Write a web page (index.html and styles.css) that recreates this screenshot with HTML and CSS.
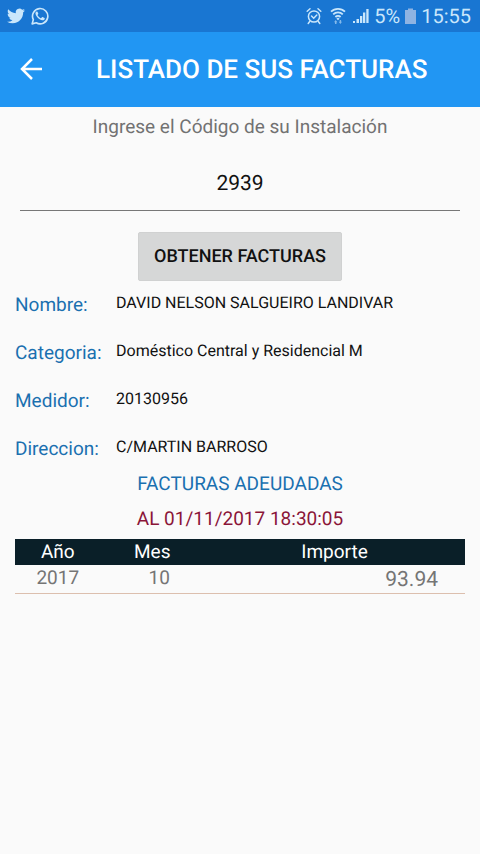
FILE: index.html
```
<!DOCTYPE html>
<html lang="es">
<head>
<meta charset="utf-8">
<meta name="viewport" content="width=device-width, initial-scale=1">
<title>Listado de sus facturas</title>
<link rel="stylesheet" href="styles.css">
</head>
<body>
<div class="status">
  <div class="status-group">
    <svg width="18" height="18" viewBox="0 0 24 24" fill="currentColor" aria-hidden="true"><path d="M23.95 4.57a10 10 0 0 1-2.82.77 4.96 4.96 0 0 0 2.16-2.72c-.95.55-2 .95-3.13 1.18a4.92 4.92 0 0 0-8.38 4.48C7.69 8.1 4.07 6.13 1.64 3.16a4.82 4.82 0 0 0-.67 2.48c0 1.71.87 3.21 2.19 4.1a4.9 4.9 0 0 1-2.23-.62v.06a4.92 4.92 0 0 0 3.95 4.83 5 5 0 0 1-2.21.08 4.94 4.94 0 0 0 4.6 3.42A9.87 9.87 0 0 1 0 19.54a13.99 13.99 0 0 0 7.55 2.21c9.05 0 14-7.5 14-13.98 0-.21 0-.42-.02-.63a9.94 9.94 0 0 0 2.42-2.57z"/></svg>
    <svg width="18" height="18" viewBox="0 0 24 24" aria-hidden="true"><path d="M1.5 22.5l1.6-5.7A10.2 10.2 0 1 1 7 21z" fill="none" stroke="currentColor" stroke-width="2.2" stroke-linejoin="round"/><path d="M8.6 6.3c-.3-.5-.8-.5-1.2-.4-1.2.7-1.6 1.8-1.4 3.2.9 4.2 5 8.1 9.1 8.7 1.5.1 3-.8 3.2-2.3.1-.4 0-.7-.3-.8l-2.6-1.3c-.3-.1-.6-.1-.8.2l-.9 1.2c-.2.2-.5.2-.8.1-1.8-.8-3.2-2.1-4.1-3.8-.1-.3-.1-.5.1-.7l.7-.9c.2-.3.2-.5.1-.8z" fill="currentColor"/></svg>
  </div>
  <div class="status-group status-right">
    <svg width="16" height="18" viewBox="0 0 16 18" fill="none" stroke="currentColor" stroke-width="1.5" stroke-linecap="round" aria-hidden="true"><circle cx="8" cy="9.5" r="5.6"/><path d="M1.2 4.2L4 1.8M14.8 4.2L12 1.8M3.7 14.5l-1.500 2M12.300 14.500l1.500 2M5.500 9l2.200 2.200L10.800 8"/></svg>
    <svg class="wifi" width="16" height="18" viewBox="0 0 16 18" fill="none" stroke="currentColor" stroke-width="1.8" aria-hidden="true"><path d="M1 4.700a9.900 9.900 0 0 1 14 0M3.200 7.400a6.800 6.800 0 0 1 9.600 0M5.400 10a3.700 3.700 0 0 1 5.200 0"/><path d="M8 10.500l1.600 1.300L8 13.300l-1.600-1.500z" fill="currentColor" stroke="none"/><path d="M4 15.200L5.700 13l1.700 2.200H6.500V17H5v-1.800zM8.700 14.800h1V13h1.400v1.800H12L10.400 17z" fill="currentColor" stroke="none" opacity=".6"/></svg>
    <svg width="16" height="18" viewBox="0 0 16 18" fill="currentColor" aria-hidden="true"><path d="M0 14h2v2H0zM3.500 12H6v4H3.500zM7 9h2.300v7H7zM10 5.500h2.300V16H10zM13.300 2h2.300v14h-2.300z"/></svg>
    <span>5%</span>
    <svg width="11" height="18" viewBox="0 0 11 18" aria-hidden="true"><path d="M3 1.500h5V3h3v14H0V3h3z" fill="#8fb3e2"/></svg>
    <time class="clock">15:55</time>
  </div>
</div>
<header class="bar">
  <button class="back" type="button" aria-label="Volver">
    <svg width="24" height="24" viewBox="0 0 24 24" fill="none" stroke="currentColor" stroke-width="2.500" aria-hidden="true"><path d="M22 11H2M12 1L2 11l10 10"/></svg>
  </button>
  <h1>LISTADO DE SUS FACTURAS</h1>
</header>
<main>
  <form class="search">
    <label for="code">Ingrese el Código de su Instalación</label>
    <input id="code" type="text" inputmode="numeric" value="2939">
    <button class="submit" type="button">OBTENER FACTURAS</button>
  </form>
  <dl class="details">
    <dt>Nombre:</dt><dd>DAVID NELSON SALGUEIRO LANDIVAR</dd>
    <dt>Categoria:</dt><dd>Doméstico Central y Residencial M</dd>
    <dt>Medidor:</dt><dd>20130956</dd>
    <dt>Direccion:</dt><dd>C/MARTIN BARROSO</dd>
  </dl>
  <h2>FACTURAS ADEUDADAS</h2>
  <p class="date">AL 01/11/2017 18:30:05</p>
  <table>
    <thead><tr><th class="year">Año</th><th class="month">Mes</th><th>Importe</th></tr></thead>
    <tbody><tr><td>2017</td><td class="month-value">10</td><td class="amount">93.94</td></tr></tbody>
  </table>
</main>
</body>
</html>
```
FILE: styles.css
```
* { box-sizing: border-box; }
body {
  margin: 0;
  min-height: 100vh;
  background: #fafafa;
  color: #111;
  font-family: Roboto, "Liberation Sans", sans-serif;
  font-size: 19px;
  line-height: 24px;
  text-rendering: geometricPrecision;
}
svg { display: block; flex: none; }
h1, h2, p, dl, dd { margin: 0; font-weight: 400; }
.status {
  display: flex;
  justify-content: space-between;
  align-items: center;
  height: 32px;
  padding: 0 9px 0 7px;
  background: #1976d2;
  color: #c9e6fb;
  font-size: 20px;
}
.status-group { display: flex; align-items: center; gap: 6px; }
.status-right { gap: 5px; }
.wifi { margin: 0 2px 0 3px; }
.bar {
  display: flex;
  align-items: center;
  height: 75px;
  padding: 0 16px;
  background: #2196f3;
  color: #fff;
}
.back {
  width: 80px;
  padding: 4px;
  border: 0;
  background: none;
  color: inherit;
}
.bar h1 { font-size: 26px; font-weight: 500; line-height: 32px; white-space: nowrap; }
main { padding: 8px 15px; }
.search { display: flex; flex-direction: column; align-items: center; }
.search label { color: #727272; }
.search input {
  align-self: stretch;
  height: 72px;
  margin: 0 5px 21px;
  padding: 18px 0 0;
  border: 0;
  border-bottom: 1px solid #777;
  background: none;
  color: #111;
  font: inherit;
  font-size: 21px;
  text-align: center;
  text-rendering: inherit;
}
.submit {
  height: 49px;
  padding: 0 15px;
  border: 1px solid #d0d1d1;
  border-radius: 2px;
  background: #d6d7d7;
  color: #111;
  font: inherit;
  font-size: 18px;
  font-weight: 500;
  text-rendering: inherit;
}
.details {
  display: grid;
  grid-template-columns: 101px 1fr;
  grid-auto-rows: 24px;
  row-gap: 24px;
  padding: 12px 0 11px;
}
.details dt { color: #1a70b0; }
.details dd { color: #111; font-size: 16px; line-height: 20px; }
h2 { color: #1a70b0; font-size: 19px; text-align: center; margin-bottom: 11px; }
.date { color: #8a1538; text-align: center; margin-bottom: 8px; }
table { width: 100%; table-layout: fixed; border-spacing: 0; }
th, td { padding: 0; text-align: center; }
th { height: 26px; background: #0a1f28; color: #fff; font-weight: 400; }
th.year { width: 19%; }
th.month { width: 23%; }
td { height: 29px; padding-top: 1px; border-bottom: 1px solid #dcbfae; color: #757575; vertical-align: top; }
td.month-value { padding-left: 14px; }
td.amount { padding: 3px 27px 0 0; font-size: 21px; text-align: right; }
```
